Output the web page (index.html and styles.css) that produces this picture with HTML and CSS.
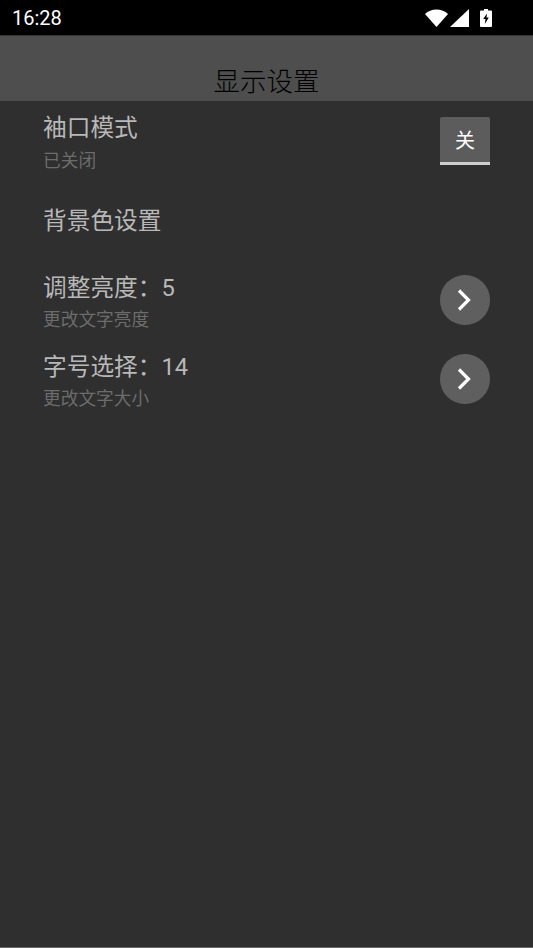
FILE: index.html
```html
<!DOCTYPE html>
<html>
<head>
    <title>显示设置</title>
    <link rel="stylesheet" href="styles.css">
</head>
<body>
    <div class="status-bar">
        <span class="clock">16:28</span>
        <div class="status-icons">
            <svg class="icon-wifi" width="23" height="18" viewBox="0 0 23 18"><path d="M0 5C3 2.200 7 .5 11.500 .5S20 2.200 23 5L11.500 18z" fill="#fff"/></svg>
            <svg class="icon-signal" width="19" height="18" viewBox="0 0 19 18"><path d="M19 0v18H0z" fill="#fff"/></svg>
            <svg class="icon-battery" width="12" height="18" viewBox="0 0 12 18"><path d="M4 0h4v1.500h3a1 1 0 0 1 1 1V17a1 1 0 0 1-1 1H1a1 1 0 0 1-1-1V2.500a1 1 0 0 1 1-1h3z" fill="#fff"/><path d="M7 4.500L3.200 10h2.300L4.800 15 8.800 8.500H6.500z" fill="#000"/></svg>
        </div>
    </div>
    <div class="title-bar">显示设置</div>

    <div class="row row-sleeve">
        <div class="row-text">
            <div class="row-title">袖口模式</div>
            <div class="row-sub">已关闭</div>
        </div>
        <div class="toggle">关</div>
    </div>
    <div class="row row-bg">
        <div class="row-title">背景色设置</div>
    </div>
    <div class="row row-bright">
        <div class="row-text">
            <div class="row-title">调整亮度：5</div>
            <div class="row-sub">更改文字亮度</div>
        </div>
        <div class="arrow-btn">
            <svg width="18" height="24" viewBox="0 0 18 24"><path d="M3 2.500L12.500 12 3 21.500" fill="none" stroke="#fff" stroke-width="3.200"/></svg>
        </div>
    </div>
    <div class="row row-font">
        <div class="row-text">
            <div class="row-title">字号选择：14</div>
            <div class="row-sub">更改文字大小</div>
        </div>
        <div class="arrow-btn">
            <svg width="18" height="24" viewBox="0 0 18 24"><path d="M3 2.500L12.500 12 3 21.500" fill="none" stroke="#fff" stroke-width="3.200"/></svg>
        </div>
    </div>
</body>
</html>
```

FILE: styles.css
```css
html, body {
    height: 100%;
}
body {
    margin: 0;
    background: #2f2f2f;
    font-family: "Noto Sans CJK SC", Roboto, sans-serif;
    border-bottom: 1px solid #6a6a6a;
    box-sizing: border-box;
    overflow: hidden;
}
.status-bar {
    height: 35px;
    background: #000;
    border-bottom: 1px solid #333;
    display: flex;
    align-items: center;
    justify-content: space-between;
    padding: 0 41px 0 12px;
}
.clock {
    font-family: Roboto, sans-serif;
    font-size: 20px;
    color: #fff;
}
.status-icons {
    display: flex;
    align-items: center;
    gap: 2px;
}
.icon-battery {
    margin-left: 9px;
}
.title-bar {
    height: 65px;
    box-sizing: border-box;
    padding-top: 24px;
    background: #4e4e4e;
    color: #000;
    font-size: 26.500px;
    font-weight: 300;
    line-height: 39px;
    text-align: center;
}
.row {
    display: flex;
    align-items: flex-start;
    justify-content: space-between;
    box-sizing: border-box;
    padding: 0 43px;
}
.row-sleeve {
    height: 78px;
    padding-top: 11px;
}
.row-bg {
    height: 81px;
    padding-top: 26px;
}
.row-bright {
    height: 79.400px;
    padding-top: 11.500px;
}
.row-font {
    height: 80px;
    padding-top: 11.500px;
}
.row-title {
    font-size: 23.700px;
    line-height: 32px;
    color: #b8b8b8;
    font-family: Roboto, "Noto Sans CJK SC", sans-serif;
}
.row-sub {
    margin-top: 1px;
    font-size: 17.700px;
    line-height: 26px;
    color: #6c6c6c;
}
.row-sleeve .row-sub {
    margin-top: 2px;
}
.toggle {
    width: 50px;
    height: 48px;
    margin-top: 5px;
    box-sizing: border-box;
    background: #5c5c5c;
    border-bottom: 3px solid #cfcfcf;
    border-radius: 2px 2px 0 0;
    color: #fff;
    font-size: 20px;
    display: flex;
    align-items: center;
    justify-content: center;
}
.arrow-btn {
    width: 49.500px;
    height: 49.500px;
    margin-top: 3.500px;
    margin-right: .5px;
    border-radius: 50%;
    background: #5f5f5f;
    display: flex;
    align-items: center;
    justify-content: center;
}
```
